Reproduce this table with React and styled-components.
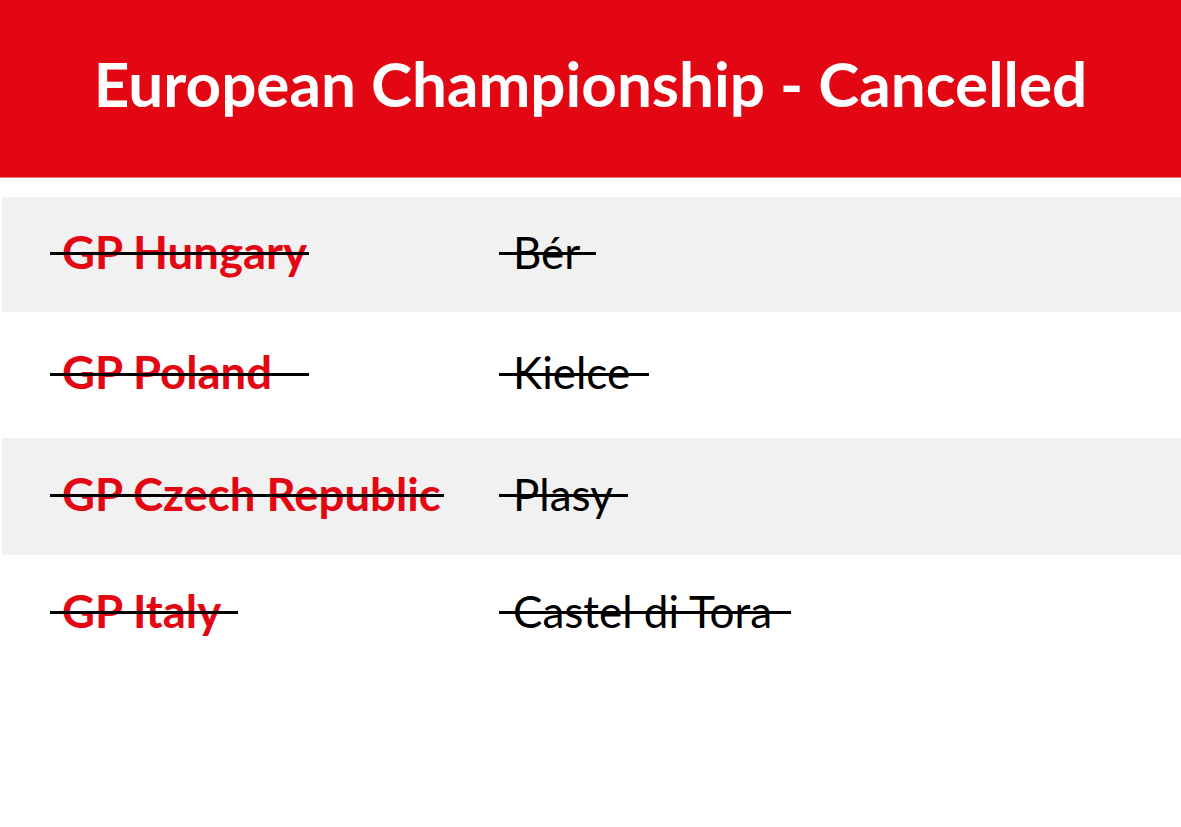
import React from 'react'
import styled, { createGlobalStyle } from 'styled-components'

const races = [
    { gp: 'GP Hungary', gpLine: 259, place: 'Bér', placeLine: 97, h: 115, shade: true },
    { gp: 'GP Poland', gpLine: 259, place: 'Kielce', placeLine: 150, h: 126 },
    { gp: 'GP Czech Republic', gpLine: 394, place: 'Plasy', placeLine: 129, h: 117, shade: true },
    { gp: 'GP Italy', gpLine: 188, place: 'Castel di Tora', placeLine: 292, h: 117 },
]

const GlobalStyle = createGlobalStyle`
    body {
        margin: 0;
        background: #fff;
        font-family: Lato, "Open Sans", sans-serif;
    }
`

function App() {
    return (
        <Page>
            <GlobalStyle />
            <Header>
                <Title>European Championship - Cancelled</Title>
            </Header>
            <Table>
                {races.map(r => (
                    <Row key={r.gp} $shade={r.shade} $h={r.h}>
                        <GpName $line={r.gpLine} $lead={12}>{r.gp}</GpName>
                        <Place $line={r.placeLine} $lead={14}>{r.place}</Place>
                    </Row>
                ))}
            </Table>
        </Page>
    )
}

const Page = styled.div`
    width: 1181px;
    height: 827px;
    overflow: hidden;
    background: #fff;
`

const Header = styled.header`
    height: 177px;
    background: #e30613;
    display: flex;
    align-items: center;
    justify-content: center;
    border-bottom: 1px solid #ee7078;
`

const Title = styled.h1`
    margin: 0 0 12px;
    color: #fff;
    font-weight: 700;
    font-size: 62px;
    line-height: 1;
    letter-spacing: 0;
`

const Table = styled.div`
    margin-top: 19px;
    padding-left: 2px;
    display: flex;
    flex-direction: column;
`

const Row = styled.div`
    box-sizing: border-box;
    height: ${p => p.$h}px;
    display: grid;
    grid-template-columns: 453px 1fr;
    align-items: center;
    padding: 0 0 6px 60px;
    background: ${p => (p.$shade ? '#f1f1f1' : '#fff')};
`

const Struck = styled.span`
    position: relative;
    justify-self: start;
    line-height: 1;

    &::after {
        content: '';
        position: absolute;
        left: -${p => p.$lead}px;
        width: ${p => p.$line}px;
        top: 0.52em;
        height: 3px;
        background: #000;
    }
`

const GpName = styled(Struck)`
    color: #e30613;
    font-weight: 700;
    font-size: 45.5px;
`

const Place = styled(Struck)`
    margin-left: -2px;
    color: #000;
    font-weight: 400;
    font-size: 44px;
`

export default App
